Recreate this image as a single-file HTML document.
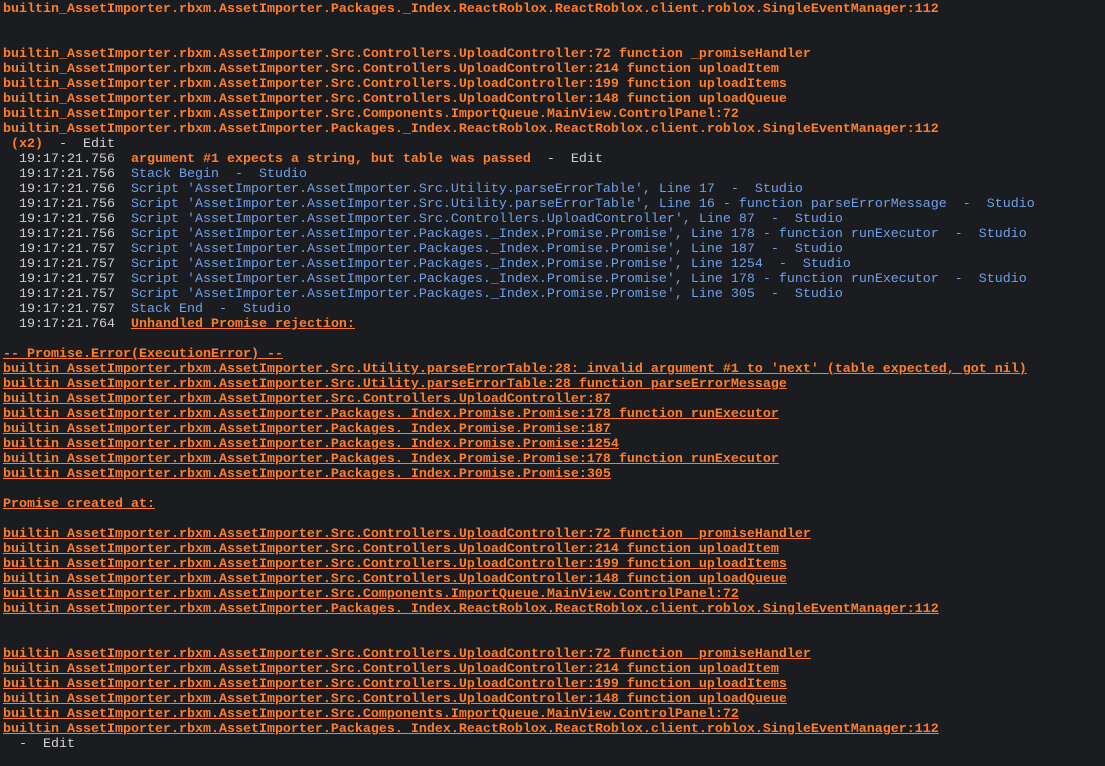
<!DOCTYPE html>
<html><head><meta charset="utf-8"><style>
html,body{margin:0;padding:0;background:#1b1c1f;width:1105px;height:766px;overflow:hidden}
.c{position:absolute;left:3px;top:1px;font-family:"Liberation Mono",monospace;font-size:13.33px;line-height:15px;white-space:pre;color:#d4d4d4}
.l{position:absolute;left:0;height:15px}
.o{color:#ff7d2a;font-weight:bold}
.u{color:#ff7d2a;font-weight:bold;text-decoration:underline}
.b{color:#6fa0e8}
.t{color:#cfcfcf}
</style></head><body><div class="c">
<div class="l o" style="top:1px">builtin_AssetImporter.rbxm.AssetImporter.Packages._Index.ReactRoblox.ReactRoblox.client.roblox.SingleEventManager:112</div>
<div class="l o" style="top:46px">builtin_AssetImporter.rbxm.AssetImporter.Src.Controllers.UploadController:72 function _promiseHandler</div>
<div class="l o" style="top:61px">builtin_AssetImporter.rbxm.AssetImporter.Src.Controllers.UploadController:214 function uploadItem</div>
<div class="l o" style="top:76px">builtin_AssetImporter.rbxm.AssetImporter.Src.Controllers.UploadController:199 function uploadItems</div>
<div class="l o" style="top:91px">builtin_AssetImporter.rbxm.AssetImporter.Src.Controllers.UploadController:148 function uploadQueue</div>
<div class="l o" style="top:106px">builtin_AssetImporter.rbxm.AssetImporter.Src.Components.ImportQueue.MainView.ControlPanel:72</div>
<div class="l o" style="top:121px">builtin_AssetImporter.rbxm.AssetImporter.Packages._Index.ReactRoblox.ReactRoblox.client.roblox.SingleEventManager:112</div>
<div class="l" style="top:136px"> <span class="o">(x2)</span>  -  Edit</div>
<div class="l t" style="top:151px">  19:17:21.756  <span class="o">argument #1 expects a string, but table was passed</span>  -  Edit</div>
<div class="l t" style="top:166px">  19:17:21.756  <span class="b">Stack Begin  -  Studio</span></div>
<div class="l t" style="top:181px">  19:17:21.756  <span class="b">Script 'AssetImporter.AssetImporter.Src.Utility.parseErrorTable', Line 17  -  Studio</span></div>
<div class="l t" style="top:196px">  19:17:21.756  <span class="b">Script 'AssetImporter.AssetImporter.Src.Utility.parseErrorTable', Line 16 - function parseErrorMessage  -  Studio</span></div>
<div class="l t" style="top:211px">  19:17:21.756  <span class="b">Script 'AssetImporter.AssetImporter.Src.Controllers.UploadController', Line 87  -  Studio</span></div>
<div class="l t" style="top:226px">  19:17:21.756  <span class="b">Script 'AssetImporter.AssetImporter.Packages._Index.Promise.Promise', Line 178 - function runExecutor  -  Studio</span></div>
<div class="l t" style="top:241px">  19:17:21.757  <span class="b">Script 'AssetImporter.AssetImporter.Packages._Index.Promise.Promise', Line 187  -  Studio</span></div>
<div class="l t" style="top:256px">  19:17:21.757  <span class="b">Script 'AssetImporter.AssetImporter.Packages._Index.Promise.Promise', Line 1254  -  Studio</span></div>
<div class="l t" style="top:271px">  19:17:21.757  <span class="b">Script 'AssetImporter.AssetImporter.Packages._Index.Promise.Promise', Line 178 - function runExecutor  -  Studio</span></div>
<div class="l t" style="top:286px">  19:17:21.757  <span class="b">Script 'AssetImporter.AssetImporter.Packages._Index.Promise.Promise', Line 305  -  Studio</span></div>
<div class="l t" style="top:301px">  19:17:21.757  <span class="b">Stack End  -  Studio</span></div>
<div class="l t" style="top:316px">  19:17:21.764  <span class="u">Unhandled Promise rejection:</span></div>
<div class="l u" style="top:346px">-- Promise.Error(ExecutionError) --</div>
<div class="l u" style="top:361px">builtin_AssetImporter.rbxm.AssetImporter.Src.Utility.parseErrorTable:28: invalid argument #1 to 'next' (table expected, got nil)</div>
<div class="l u" style="top:376px">builtin_AssetImporter.rbxm.AssetImporter.Src.Utility.parseErrorTable:28 function parseErrorMessage</div>
<div class="l u" style="top:391px">builtin_AssetImporter.rbxm.AssetImporter.Src.Controllers.UploadController:87</div>
<div class="l u" style="top:406px">builtin_AssetImporter.rbxm.AssetImporter.Packages._Index.Promise.Promise:178 function runExecutor</div>
<div class="l u" style="top:421px">builtin_AssetImporter.rbxm.AssetImporter.Packages._Index.Promise.Promise:187</div>
<div class="l u" style="top:436px">builtin_AssetImporter.rbxm.AssetImporter.Packages._Index.Promise.Promise:1254</div>
<div class="l u" style="top:451px">builtin_AssetImporter.rbxm.AssetImporter.Packages._Index.Promise.Promise:178 function runExecutor</div>
<div class="l u" style="top:466px">builtin_AssetImporter.rbxm.AssetImporter.Packages._Index.Promise.Promise:305</div>
<div class="l u" style="top:496px">Promise created at:</div>
<div class="l u" style="top:526px">builtin_AssetImporter.rbxm.AssetImporter.Src.Controllers.UploadController:72 function _promiseHandler</div>
<div class="l u" style="top:541px">builtin_AssetImporter.rbxm.AssetImporter.Src.Controllers.UploadController:214 function uploadItem</div>
<div class="l u" style="top:556px">builtin_AssetImporter.rbxm.AssetImporter.Src.Controllers.UploadController:199 function uploadItems</div>
<div class="l u" style="top:571px">builtin_AssetImporter.rbxm.AssetImporter.Src.Controllers.UploadController:148 function uploadQueue</div>
<div class="l u" style="top:586px">builtin_AssetImporter.rbxm.AssetImporter.Src.Components.ImportQueue.MainView.ControlPanel:72</div>
<div class="l u" style="top:601px">builtin_AssetImporter.rbxm.AssetImporter.Packages._Index.ReactRoblox.ReactRoblox.client.roblox.SingleEventManager:112</div>
<div class="l u" style="top:646px">builtin_AssetImporter.rbxm.AssetImporter.Src.Controllers.UploadController:72 function _promiseHandler</div>
<div class="l u" style="top:661px">builtin_AssetImporter.rbxm.AssetImporter.Src.Controllers.UploadController:214 function uploadItem</div>
<div class="l u" style="top:676px">builtin_AssetImporter.rbxm.AssetImporter.Src.Controllers.UploadController:199 function uploadItems</div>
<div class="l u" style="top:691px">builtin_AssetImporter.rbxm.AssetImporter.Src.Controllers.UploadController:148 function uploadQueue</div>
<div class="l u" style="top:706px">builtin_AssetImporter.rbxm.AssetImporter.Src.Components.ImportQueue.MainView.ControlPanel:72</div>
<div class="l u" style="top:721px">builtin_AssetImporter.rbxm.AssetImporter.Packages._Index.ReactRoblox.ReactRoblox.client.roblox.SingleEventManager:112</div>
<div class="l" style="top:736px">  -  Edit</div>
</div></body></html>
